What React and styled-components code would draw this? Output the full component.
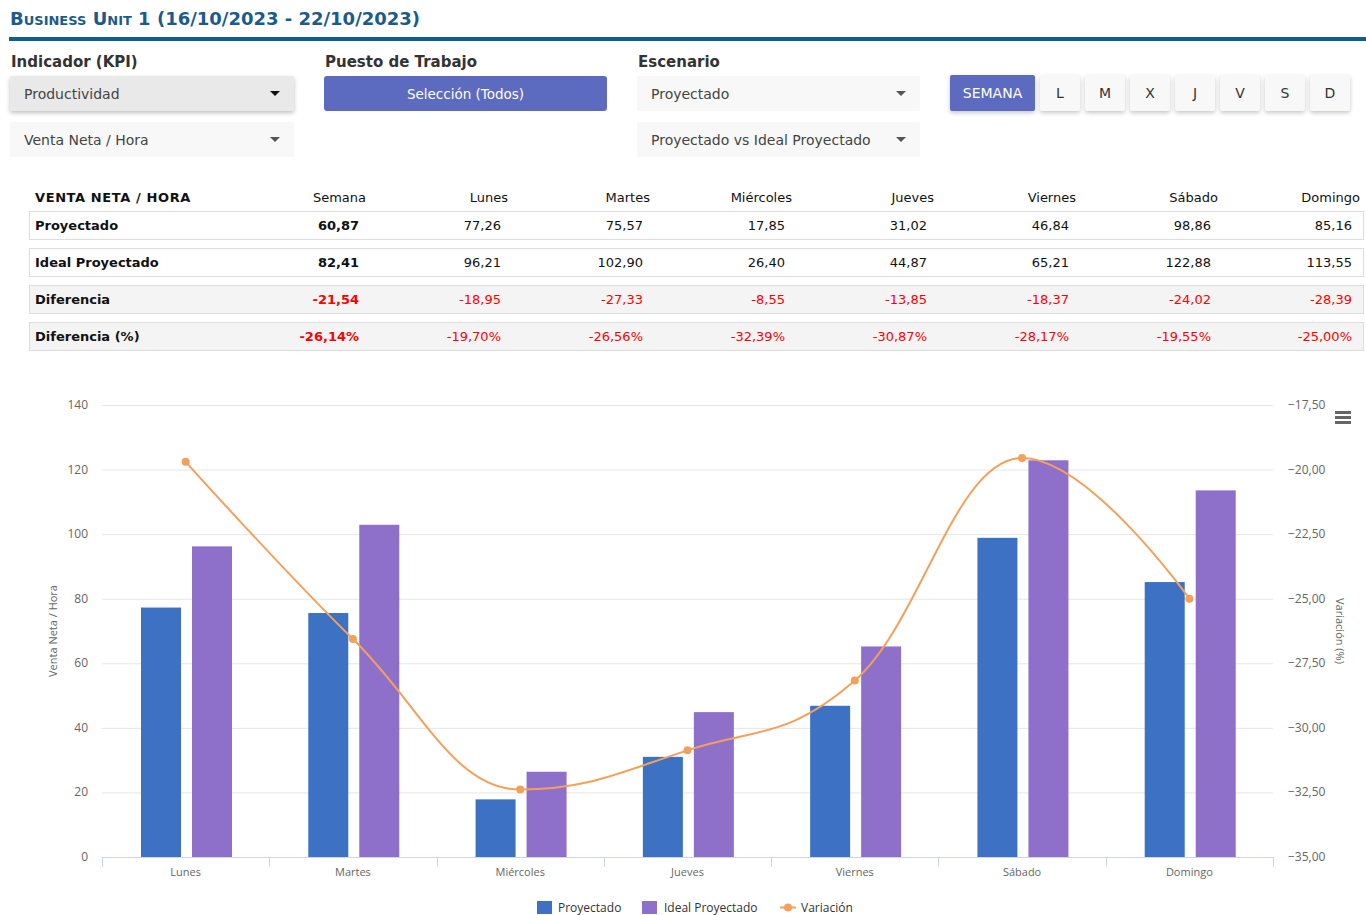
import React from "react";
import styled, { createGlobalStyle } from "styled-components";

const GlobalStyle = createGlobalStyle`
  html, body {
    margin: 0;
    padding: 0;
    background: #ffffff;
    font-family: "DejaVu Sans", Verdana, sans-serif;
    color: #333333;
  }
`;

const Page = styled.div`
  width: 1366px;
  height: 915px;
  overflow: hidden;
`;

const Title = styled.h1`
  margin: 0 0 0 9px;
  height: 37px;
  padding-left: 1px;
  display: flex;
  align-items: center;
  font-size: 18px;
  font-weight: bold;
  font-variant: small-caps;
  color: #1b5b8c;
  border-bottom: 4px solid #0e5d92;
  box-sizing: content-box;
`;

const Filters = styled.div`
  display: grid;
  grid-template-columns: 284px 283px 283px auto;
  column-gap: 30px;
  padding: 0 10px;
`;

const FilterColumn = styled.div`
  display: flex;
  flex-direction: column;
  gap: 11px;
`;

const Label = styled.div`
  height: 20px;
  line-height: 20px;
  margin-top: 11px;
  margin-bottom: -7px;
  padding-left: 1px;
  font-size: 15px;
  font-weight: bold;
  color: #333333;
`;

const Select = styled.div`
  height: 35px;
  display: flex;
  align-items: center;
  justify-content: space-between;
  padding: 0 14px 0 14px;
  font-size: 14px;
  color: #444444;
  background: ${(p) => (p.$active ? "#e9e9e9" : "#f8f8f8")};
  border-radius: 2px;
  box-shadow: ${(p) =>
    p.$active ? "0 2px 4px rgba(0,0,0,0.25)" : "none"};
  box-sizing: border-box;
`;

const Caret = styled.span`
  width: 0;
  height: 0;
  border-left: 5px solid transparent;
  border-right: 5px solid transparent;
  border-top: 5px solid ${(p) => (p.$dark ? "#111111" : "#555555")};
`;

const PrimaryButton = styled.div`
  height: 35px;
  display: flex;
  align-items: center;
  justify-content: center;
  background: #5c6bc0;
  color: #ffffff;
  border-radius: 3px;
  font-size: 13.5px;
`;

const DayGroup = styled.div`
  display: flex;
  gap: 5px;
  margin-top: -1px;
`;

const DayButton = styled.div`
  height: 36px;
  width: ${(p) => (p.$wide ? "85px" : "40px")};
  display: flex;
  align-items: center;
  justify-content: center;
  font-size: 14px;
  border-radius: 2px;
  background: ${(p) => (p.$selected ? "#5c6bc0" : "#f8f8f8")};
  color: ${(p) => (p.$selected ? "#ffffff" : "#333333")};
  box-shadow: 0 2px 4px rgba(0, 0, 0, 0.22);
`;

const TableWrap = styled.div`
  padding: 28px 2px 0 29px;
`;

const Table = styled.table`
  width: 100%;
  border-collapse: separate;
  border-spacing: 0 8px;
  table-layout: fixed;
  font-size: 13px;
`;

const Th = styled.th`
  text-align: ${(p) => (p.$first ? "left" : "right")};
  font-weight: ${(p) => (p.$first ? "bold" : "normal")};
  letter-spacing: ${(p) => (p.$first ? "0.6px" : "0")};
  padding: ${(p) => (p.$first ? "0 0 0 6px" : "0 4px 0 0")};
  line-height: 10px;
  vertical-align: bottom;
  color: #111111;
`;

const Td = styled.td`
  height: 27px;
  padding: ${(p) => (p.$first ? "0 0 0 5px" : "0 11px 0 0")};
  text-align: ${(p) => (p.$first ? "left" : "right")};
  font-weight: ${(p) => (p.$bold ? "bold" : "normal")};
  color: ${(p) => (p.$negative ? "#ff0000" : "#111111")};
  background: ${(p) => (p.$shaded ? "#f4f4f4" : "#ffffff")};
  border-top: 1px solid #dddddd;
  border-bottom: 1px solid #dddddd;
  border-left: ${(p) => (p.$first ? "1px solid #dddddd" : "none")};
  border-right: ${(p) => (p.$last ? "1px solid #dddddd" : "none")};
`;

const ChartBox = styled.div`
  margin-top: 11px;
`;

const days = ["Lunes", "Martes", "Miércoles", "Jueves", "Viernes", "Sábado", "Domingo"];
const proyectado = [77.26, 75.57, 17.85, 31.02, 46.84, 98.86, 85.16];
const ideal = [96.21, 102.9, 26.4, 44.87, 65.21, 122.88, 113.55];
const variacion = [-19.7, -26.56, -32.39, -30.87, -28.17, -19.55, -25.0];

const fmt = (v) => v.toFixed(2).replace(".", ",");

const rows = [
  { label: "Proyectado", semana: 60.87, values: proyectado },
  { label: "Ideal Proyectado", semana: 82.41, values: ideal },
  {
    label: "Diferencia",
    semana: -21.54,
    values: [-18.95, -27.33, -8.55, -13.85, -18.37, -24.02, -28.39],
    shaded: true,
  },
  {
    label: "Diferencia (%)",
    semana: -26.14,
    values: variacion,
    shaded: true,
    pct: true,
  },
];

const KpiTable = () => (
  <TableWrap>
    <Table>
      <colgroup>
        <col style={{ width: 199 }} />
        {Array.from({ length: 8 }).map((_, i) => (
          <col key={i} />
        ))}
      </colgroup>
      <thead>
        <tr>
          <Th $first>VENTA NETA / HORA</Th>
          <Th>Semana</Th>
          {days.map((d) => (
            <Th key={d}>{d}</Th>
          ))}
        </tr>
      </thead>
      <tbody>
        {rows.map((r) => (
          <tr key={r.label}>
            <Td $first $bold $shaded={r.shaded}>
              {r.label}
            </Td>
            <Td $bold $shaded={r.shaded} $negative={r.semana < 0}>
              {fmt(r.semana)}
              {r.pct ? "%" : ""}
            </Td>
            {r.values.map((v, i) => (
              <Td
                key={i}
                $shaded={r.shaded}
                $negative={v < 0}
                $last={i === r.values.length - 1}
              >
                {fmt(v)}
                {r.pct ? "%" : ""}
              </Td>
            ))}
          </tr>
        ))}
      </tbody>
    </Table>
  </TableWrap>
);

// chart geometry in page coordinates
const X0 = 102;
const X1 = 1273;
const Y0 = 857;
const Y1 = 405;
const CAT = (X1 - X0) / 7;
const yLeft = (v) => Y0 - (v / 140) * (Y0 - Y1);
const yRight = (v) => Y1 + ((-17.5 - v) / 17.5) * (Y0 - Y1);

const BLUE = "#3c71c3";
const PURPLE = "#8e6fca";
const ORANGE = "#f5a05a";
const LABEL = "#666666";

function splinePath(pts) {
  const sm = 1.5;
  const d = sm + 1;
  const ctrl = pts.map((p, i) => {
    if (i === 0 || i === pts.length - 1) return null;
    const l = pts[i - 1];
    const n = pts[i + 1];
    const lx = (sm * p.x + l.x) / d;
    let ly = (sm * p.y + l.y) / d;
    const rx = (sm * p.x + n.x) / d;
    let ry = (sm * p.y + n.y) / d;
    const corr = ((ry - ly) * (rx - p.x)) / (rx - lx) + p.y - ry;
    ly += corr;
    ry += corr;
    if (ly > l.y && ly > p.y) {
      ly = Math.max(l.y, p.y);
      ry = 2 * p.y - ly;
    } else if (ly < l.y && ly < p.y) {
      ly = Math.min(l.y, p.y);
      ry = 2 * p.y - ly;
    }
    if (ry > n.y && ry > p.y) {
      ry = Math.max(n.y, p.y);
      ly = 2 * p.y - ry;
    } else if (ry < n.y && ry < p.y) {
      ry = Math.min(n.y, p.y);
      ly = 2 * p.y - ry;
    }
    return { lx, ly, rx, ry };
  });
  let dStr = `M ${pts[0].x} ${pts[0].y}`;
  for (let i = 1; i < pts.length; i++) {
    const prev = pts[i - 1];
    const pc = ctrl[i - 1];
    const c = ctrl[i];
    const p = pts[i];
    dStr += ` C ${pc ? pc.rx : prev.x} ${pc ? pc.ry : prev.y} ${c ? c.lx : p.x} ${
      c ? c.ly : p.y
    } ${p.x} ${p.y}`;
  }
  return dStr;
}

const Chart = () => {
  const leftTicks = [0, 20, 40, 60, 80, 100, 120, 140];
  const rightTicks = [-17.5, -20, -22.5, -25, -27.5, -30, -32.5, -35];
  const pts = variacion.map((v, i) => ({ x: X0 + CAT * (i + 0.5), y: yRight(v) }));

  return (
    <svg width="1366" height="545" viewBox="0 370 1366 545" style={{ display: "block" }}>
      <g fontFamily='"Open Sans", "Noto Sans", sans-serif' fontSize="11" fill={LABEL}>
        {leftTicks.map((t) =>
          t === 0 ? null : (
            <line key={t} x1={X0} x2={X1} y1={yLeft(t) + 0.5} y2={yLeft(t) + 0.5} stroke="#e6e6e6" />
          )
        )}
        <g fontSize="12">
          {leftTicks.map((t) => (
            <text key={t} x={88} y={yLeft(t) + 4} textAnchor="end">
              {t}
            </text>
          ))}
          {rightTicks.map((t) => (
            <text key={t} x={1288} y={yRight(t) + 4}>
              {fmt(t).replace("-", "\u2212")}
            </text>
          ))}
        </g>
        <text transform={`translate(57 631) rotate(-90)`} textAnchor="middle">
          Venta Neta / Hora
        </text>
        <text transform={`translate(1336 631) rotate(90)`} textAnchor="middle">
          Variación (%)
        </text>

        {days.map((d, i) => {
          const x = X0 + CAT * i;
          return (
            <g key={d}>
              <rect x={x + 39} y={yLeft(proyectado[i])} width="40" height={Y0 - yLeft(proyectado[i])} fill={BLUE} />
              <rect x={x + 90} y={yLeft(ideal[i])} width="40" height={Y0 - yLeft(ideal[i])} fill={PURPLE} />
              <text x={x + CAT / 2} y={876} textAnchor="middle">
                {d}
              </text>
            </g>
          );
        })}

        <line x1={X0} x2={X1} y1={Y0 + 0.5} y2={Y0 + 0.5} stroke="#ccd6eb" />
        {Array.from({ length: 8 }).map((_, i) => {
          const x = Math.round(X0 + CAT * i) + 0.5;
          return <line key={i} x1={x} x2={x} y1={Y0} y2={Y0 + 10} stroke="#ccd6eb" />;
        })}

        <path d={splinePath(pts)} fill="none" stroke={ORANGE} strokeWidth="2" />
        {pts.map((p, i) => (
          <circle key={i} cx={p.x} cy={p.y} r="4" fill={ORANGE} />
        ))}

        <g fill="#666666">
          <rect x="1335" y="411" width="16" height="3" />
          <rect x="1335" y="416" width="16" height="3" />
          <rect x="1335" y="421" width="16" height="3" />
        </g>

        <g fontSize="12" fill="#333333">
          <rect x="537" y="901" width="15" height="13" fill={BLUE} />
          <text x="558" y="912">Proyectado</text>
          <rect x="642" y="901" width="15" height="13" fill={PURPLE} />
          <text x="664" y="912">Ideal Proyectado</text>
          <line x1="780" x2="796" y1="907.5" y2="907.5" stroke={ORANGE} strokeWidth="2" />
          <circle cx="788" cy="907.5" r="4" fill={ORANGE} />
          <text x="801" y="912">Variación</text>
        </g>
      </g>
    </svg>
  );
};

export default function App() {
  return (
    <Page>
      <GlobalStyle />
      <Title>Business Unit 1 (16/10/2023 - 22/10/2023)</Title>
      <Filters>
        <FilterColumn>
          <Label>Indicador (KPI)</Label>
          <Select $active>
            Productividad
            <Caret $dark />
          </Select>
          <Select>
            Venta Neta / Hora
            <Caret />
          </Select>
        </FilterColumn>
        <FilterColumn>
          <Label>Puesto de Trabajo</Label>
          <PrimaryButton>Selección (Todos)</PrimaryButton>
        </FilterColumn>
        <FilterColumn>
          <Label>Escenario</Label>
          <Select>
            Proyectado
            <Caret />
          </Select>
          <Select>
            Proyectado vs Ideal Proyectado
            <Caret />
          </Select>
        </FilterColumn>
        <FilterColumn>
          <Label />
          <DayGroup>
            <DayButton $wide $selected>
              SEMANA
            </DayButton>
            {["L", "M", "X", "J", "V", "S", "D"].map((d) => (
              <DayButton key={d}>{d}</DayButton>
            ))}
          </DayGroup>
        </FilterColumn>
      </Filters>
      <KpiTable />
      <ChartBox>
        <Chart />
      </ChartBox>
    </Page>
  );
}
